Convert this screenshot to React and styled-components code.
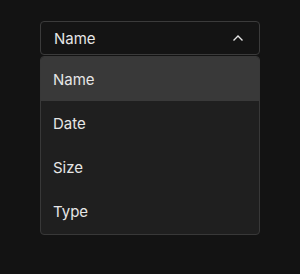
import React, { useState } from "react";
import styled, { createGlobalStyle } from "styled-components";

const GlobalStyle = createGlobalStyle`
  html, body {
    margin: 0;
    padding: 0;
    background: #131313;
  }
  body {
    font-family: Inter, "Noto Sans", sans-serif;
    -webkit-font-smoothing: antialiased;
  }
`;

const Page = styled.div`
  width: 300px;
  height: 274px;
  padding: 21px 40px 0;
  box-sizing: border-box;
`;

const SelectRoot = styled.div`
  position: relative;
  width: 220px;
`;

const Trigger = styled.button`
  display: flex;
  align-items: center;
  justify-content: space-between;
  width: 100%;
  height: 34px;
  padding: 0 15px 0 13px;
  box-sizing: border-box;
  background: #141414;
  border: 1px solid #3b3b3b;
  border-radius: 4px;
  color: #e6e6e6;
  font-family: inherit;
  font-size: 15px;
  cursor: pointer;
`;

const Menu = styled.ul`
  list-style: none;
  margin: 1px 0 0;
  padding: 0 0 1px;
  background: #1f1f1f;
  border: 1px solid #383838;
  border-radius: 4px;
  overflow: hidden;
`;

const Option = styled.li`
  display: flex;
  align-items: center;
  height: 44px;
  padding: 0 12px;
  font-size: 15px;
  color: #e6e6e6;
  background: ${p => (p.$active ? "#393939" : "transparent")};
  cursor: pointer;
`;

const Chevron = () => (
  <svg width="12" height="8" viewBox="0 0 12 8" fill="none">
    <path d="M1.5 6.5 L6 2 L10.5 6.5" stroke="#e6e6e6" strokeWidth="1.4" />
  </svg>
);

const options = ["Name", "Date", "Size", "Type"];

export default function App() {
  const [value, setValue] = useState("Name");
  return (
    <Page>
      <GlobalStyle />
      <SelectRoot>
        <Trigger>
          {value}
          <Chevron />
        </Trigger>
        <Menu>
          {options.map(o => (
            <Option key={o} $active={o === value} onClick={() => setValue(o)}>
              {o}
            </Option>
          ))}
        </Menu>
      </SelectRoot>
    </Page>
  );
}
